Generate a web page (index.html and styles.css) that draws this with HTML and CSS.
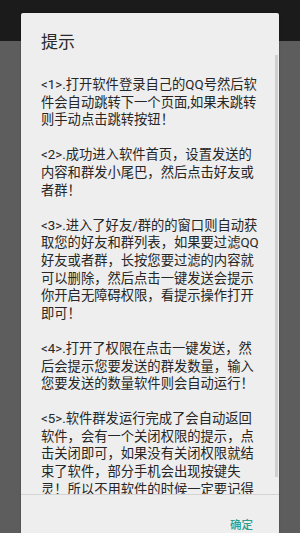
FILE: index.html
```html
<!DOCTYPE html>
<html>
<head>
<meta charset="utf-8">
<link rel="stylesheet" href="styles.css">
</head>
<body>
<div class="screen">
  <div class="topbar"></div>
  <div class="backdrop"></div>
  <div class="dialog">
    <div class="title">提示</div>
    <div class="scroll">
      <div class="thumb"></div>
      <div class="content">
        <p>&lt;1&gt;.打开软件登录自己的QQ号然后软<br>件会自动跳转下一个页面,如果未跳转<br>则手动点击跳转按钮！</p>
        <p>&lt;2&gt;.成功进入软件首页，设置发送的<br>内容和群发小尾巴，然后点击好友或<br>者群！</p>
        <p>&lt;3&gt;.进入了好友/群的的窗口则自动获<br>取您的好友和群列表，如果要过滤QQ<br>好友或者群，长按您要过滤的内容就<br>可以删除，然后点击一键发送会提示<br>你开启无障碍权限，看提示操作打开<br>即可！</p>
        <p>&lt;4&gt;.打开了权限在点击一键发送，然<br>后会提示您要发送的群发数量，输入<br>您要发送的数量软件则会自动运行！</p>
        <p>&lt;5&gt;.软件群发运行完成了会自动返回<br>软件，会有一个关闭权限的提示，点<br>击关闭即可，如果没有关闭权限就结<br>束了软件，部分手机会出现按键失<br>灵！所以不用软件的时候一定要记得</p>
      </div>
    </div>
    <div class="actions"><span class="btn">确定</span></div>
  </div>
</div>
</body>
</html>
```
FILE: styles.css
```css
html, body {
  margin: 0;
  padding: 0;
}
body {
  width: 300px;
  height: 533px;
  overflow: hidden;
  font-family: Roboto, "Noto Sans CJK SC", sans-serif;
  background: #5d5d5d;
}
.screen {
  position: relative;
  width: 300px;
  height: 533px;
  display: flex;
  flex-direction: column;
}
.topbar {
  height: 41px;
  background: #1b1b1b;
  flex: none;
}
.backdrop {
  flex: 1;
  background: #5d5d5d;
}
.dialog {
  position: absolute;
  left: 21px;
  top: 13px;
  width: 258px;
  height: 520px;
  background: #eeeeee;
  border-radius: 2px 2px 0 0;
  display: flex;
  flex-direction: column;
  box-shadow: 0 0 2px rgba(0,0,0,0.3);
}
.title {
  flex: none;
  height: 42px;
  box-sizing: border-box;
  padding: 19px 0 0 20px;
  font-size: 17px;
  line-height: 20px;
  color: #2a2a2a;
}
.scroll {
  position: relative;
  flex: none;
  height: 439px;
  overflow: hidden;
  border-bottom: 1px solid #d3d3d3;
}
.thumb {
  position: absolute;
  right: 1px;
  top: 0;
  width: 3px;
  height: 422px;
  background: #d0d0d0;
}
.content {
  padding: 21px 0 0 20px;
  font-size: 13.3px;
  line-height: 17.6px;
  color: #262626;
  white-space: nowrap;
}
.content p {
  margin: 0 0 17.6px 0;
}
.actions {
  flex: 1;
  display: flex;
  justify-content: flex-end;
  padding: 23px 26px 0 0;
}
.btn {
  font-size: 11.5px;
  line-height: 14px;
  color: #2a9d8f;
  font-weight: 500;
}
```
